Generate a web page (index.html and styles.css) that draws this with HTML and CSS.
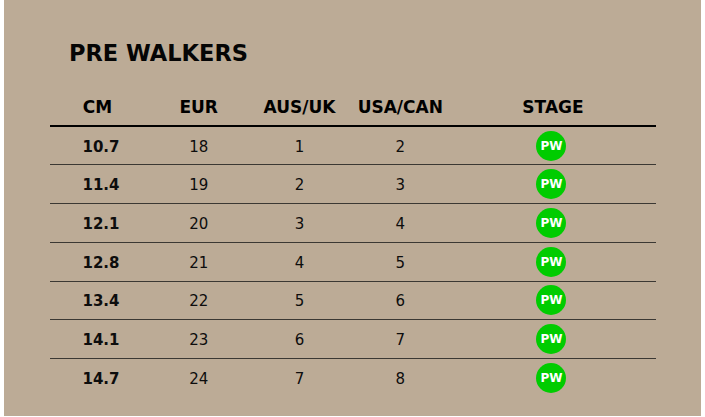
FILE: index.html
```html
<!DOCTYPE html>
<html lang="en">
<head>
<meta charset="utf-8">
<title>Pre Walkers Size Chart</title>
<link rel="stylesheet" href="styles.css">
</head>
<body>
<div class="sheet">
  <h1 class="title">PRE WALKERS</h1>
  <div class="size-table">
    <div class="row head">
      <div class="cell">CM</div>
      <div class="cell">EUR</div>
      <div class="cell">AUS/UK</div>
      <div class="cell">USA/CAN</div>
      <div class="cell stage">STAGE</div>
    </div>
    <div class="row">
      <div class="cell cm">10.7</div>
      <div class="cell num">18</div>
      <div class="cell num">1</div>
      <div class="cell num">2</div>
      <div class="cell badge-cell"><span class="badge">PW</span></div>
    </div>
    <div class="row">
      <div class="cell cm">11.4</div>
      <div class="cell num">19</div>
      <div class="cell num">2</div>
      <div class="cell num">3</div>
      <div class="cell badge-cell"><span class="badge">PW</span></div>
    </div>
    <div class="row">
      <div class="cell cm">12.1</div>
      <div class="cell num">20</div>
      <div class="cell num">3</div>
      <div class="cell num">4</div>
      <div class="cell badge-cell"><span class="badge">PW</span></div>
    </div>
    <div class="row">
      <div class="cell cm">12.8</div>
      <div class="cell num">21</div>
      <div class="cell num">4</div>
      <div class="cell num">5</div>
      <div class="cell badge-cell"><span class="badge">PW</span></div>
    </div>
    <div class="row">
      <div class="cell cm">13.4</div>
      <div class="cell num">22</div>
      <div class="cell num">5</div>
      <div class="cell num">6</div>
      <div class="cell badge-cell"><span class="badge">PW</span></div>
    </div>
    <div class="row">
      <div class="cell cm">14.1</div>
      <div class="cell num">23</div>
      <div class="cell num">6</div>
      <div class="cell num">7</div>
      <div class="cell badge-cell"><span class="badge">PW</span></div>
    </div>
    <div class="row last">
      <div class="cell cm">14.7</div>
      <div class="cell num">24</div>
      <div class="cell num">7</div>
      <div class="cell num">8</div>
      <div class="cell badge-cell"><span class="badge">PW</span></div>
    </div>
  </div>
</div>
</body>
</html>
```

FILE: styles.css
```css
html, body {
  margin: 0;
  padding: 0;
  background: #ffffff;
}

body {
  font-family: "DejaVu Sans", "Liberation Sans", sans-serif;
  color: #0d0d0d;
}

.sheet {
  margin-left: 4px;
  width: 697px;
  height: 416px;
  background: #bcab96;
  padding-top: 40px;
  box-sizing: border-box;
  overflow: hidden;
}

.title {
  margin: 0 0 0 65px;
  font-size: 22.5px;
  line-height: 26px;
  font-weight: bold;
  color: #050505;
}

.size-table {
  margin: 30.5px 0 0 46px;
  width: 606px;
}

.row {
  display: grid;
  grid-template-columns: 95px 107.4px 94.2px 107.4px 1fr;
  align-items: center;
  height: 37.7px;
  border-bottom: 1px solid #3b3833;
}

.row.last {
  border-bottom: none;
}

.row.head {
  height: auto;
  padding-bottom: 8.3px;
  border-bottom: 2px solid #000000;
  font-size: 17px;
  line-height: 20px;
  font-weight: bold;
  color: #000000;
}

.cell {
  text-align: center;
}

.row:not(.head) .cell {
  font-size: 15px;
  line-height: 18px;
  padding-top: 2px;
}

.row .cell.cm {
  font-weight: bold;
  padding-left: 7px;
}

.cell.stage {
  padding-right: 4px;
}

.row .cell.badge-cell {
  padding-top: 0;
  padding-right: 7px;
  display: flex;
  justify-content: center;
}

.badge {
  display: flex;
  align-items: center;
  justify-content: center;
  width: 30px;
  height: 30px;
  border-radius: 50%;
  background: #00cc00;
  color: #ffffff;
  font-size: 12px;
  font-weight: bold;
  line-height: 1;
}
```
